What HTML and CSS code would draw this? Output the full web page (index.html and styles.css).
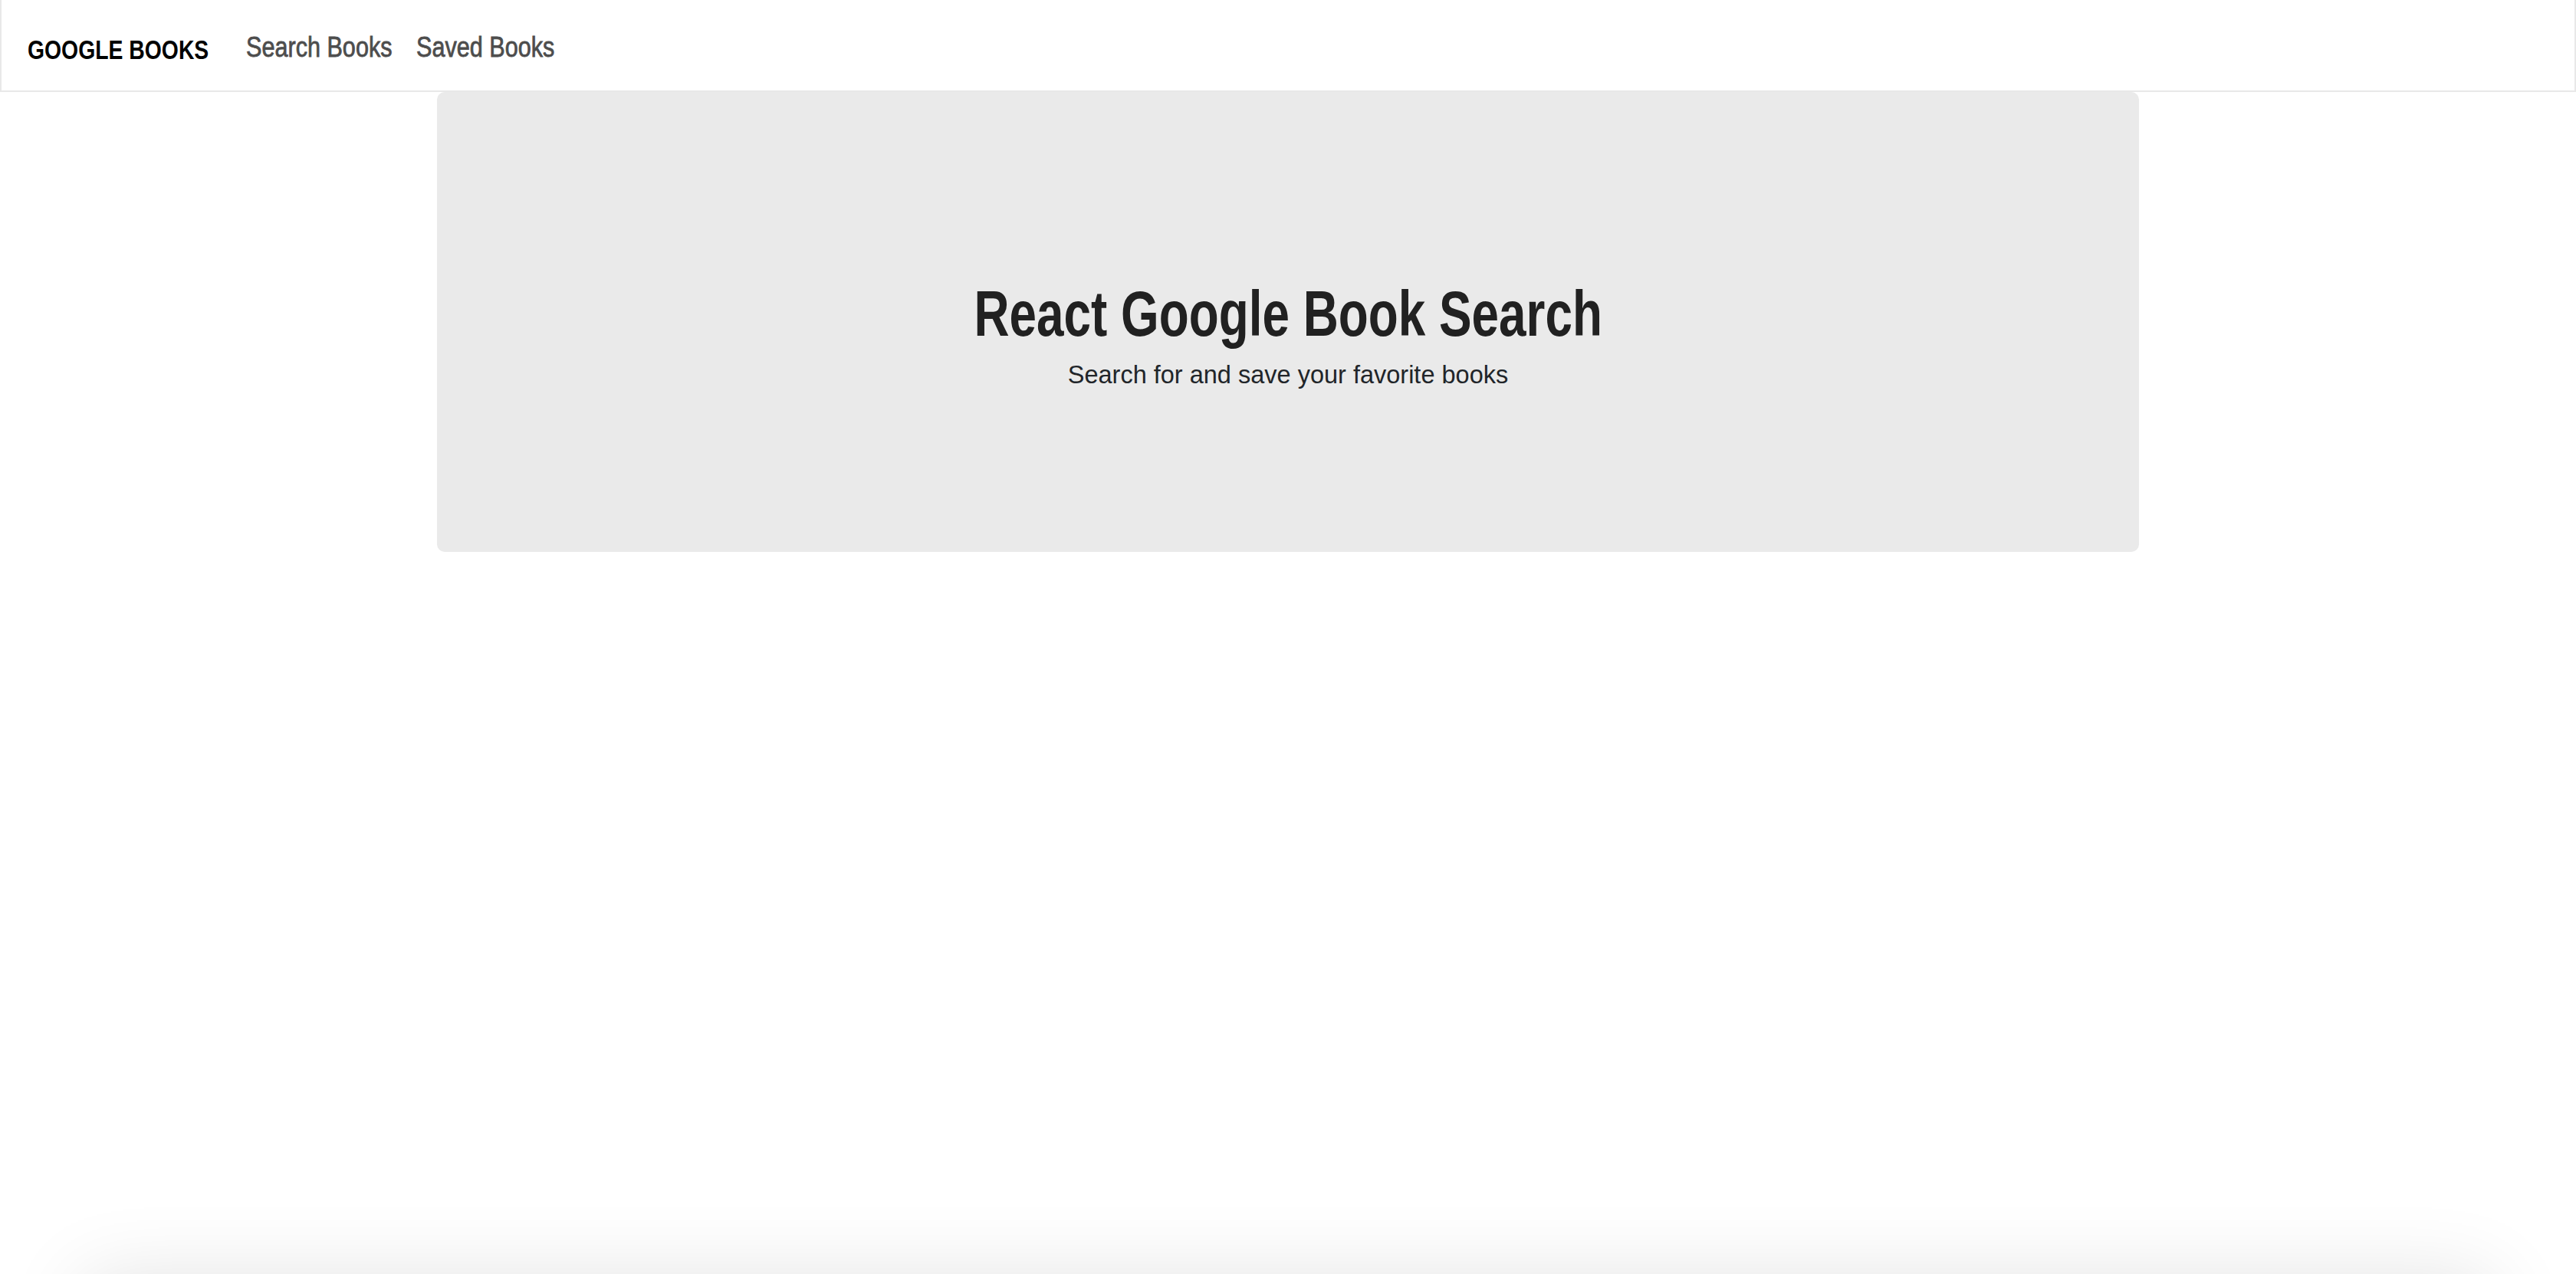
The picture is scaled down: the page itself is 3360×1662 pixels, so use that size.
FILE: index.html
```html
<!DOCTYPE html>
<html lang="en">
<head>
<meta charset="utf-8">
<title>React Google Book Search</title>
<link rel="stylesheet" href="styles.css">
</head>
<body>
<nav class="navbar">
  <a class="brand" href="#"><span class="sq sq-brand">GOOGLE BOOKS</span></a>
  <ul class="nav-links">
    <li><a class="nav-link link-search" href="#"><span class="sq sq-link">Search Books</span></a></li>
    <li><a class="nav-link link-saved" href="#"><span class="sq sq-link">Saved Books</span></a></li>
  </ul>
</nav>
<main class="container">
  <section class="jumbotron">
    <h1 class="title"><span class="sq-title">React Google Book Search</span></h1>
    <p class="subtitle">Search for and save your favorite books</p>
  </section>
</main>
<section class="results"></section>
</body>
</html>
```

FILE: styles.css
```css
html, body {
  margin: 0;
  padding: 0;
  background: #ffffff;
}

body {
  font-family: "Liberation Sans", Arial, sans-serif;
  color: #212529;
  overflow: hidden;
}

.sq {
  display: inline-block;
  white-space: nowrap;
  transform-origin: left center;
}

.navbar {
  display: flex;
  align-items: center;
  height: 118px;
  border: 2px solid #e8e8e8;
  border-top: 0;
  padding: 0 0 0 34px;
  background: #ffffff;
}

.brand {
  display: block;
  width: 237px;
  padding-top: 12px;
  font-size: 35px;
  font-weight: bold;
  color: #000000;
  text-decoration: none;
  margin-right: 32px;
  white-space: nowrap;
}

.sq-brand {
  transform: scaleX(0.81);
}

.nav-links {
  display: flex;
  list-style: none;
  margin: 0;
  padding: 0;
}

.nav-link {
  display: block;
  padding: 5px 16px 0;
  font-size: 36px;
  color: #4d4d4d;
  text-decoration: none;
  white-space: nowrap;
  -webkit-text-stroke: 0.8px #4d4d4d;
}

.link-search {
  width: 190px;
}

.link-saved {
  width: 179px;
}

.sq-link {
  transform: scaleX(0.85);
}

.container {
  width: 2220px;
  margin: 0 auto;
}

.jumbotron {
  height: 600px;
  background: #eaeaea;
  border-radius: 10px;
  display: flex;
  flex-direction: column;
  align-items: center;
  justify-content: center;
  padding-top: 36px;
  box-sizing: border-box;
}

.title {
  margin: 0;
  font-size: 84px;
  font-weight: bold;
  line-height: 1;
  color: #212121;
  white-space: nowrap;
}

.sq-title {
  display: inline-block;
  transform: scaleX(0.76);
  transform-origin: center center;
}

.subtitle {
  margin: 19px 0 0;
  font-size: 32.5px;
  line-height: 1.2;
  color: #212529;
}

.results {
  width: 3140px;
  height: 400px;
  margin: 950px auto 0;
  background: #ffffff;
  box-shadow: 0 0 100px rgba(0, 0, 0, 0.12);
}
```
